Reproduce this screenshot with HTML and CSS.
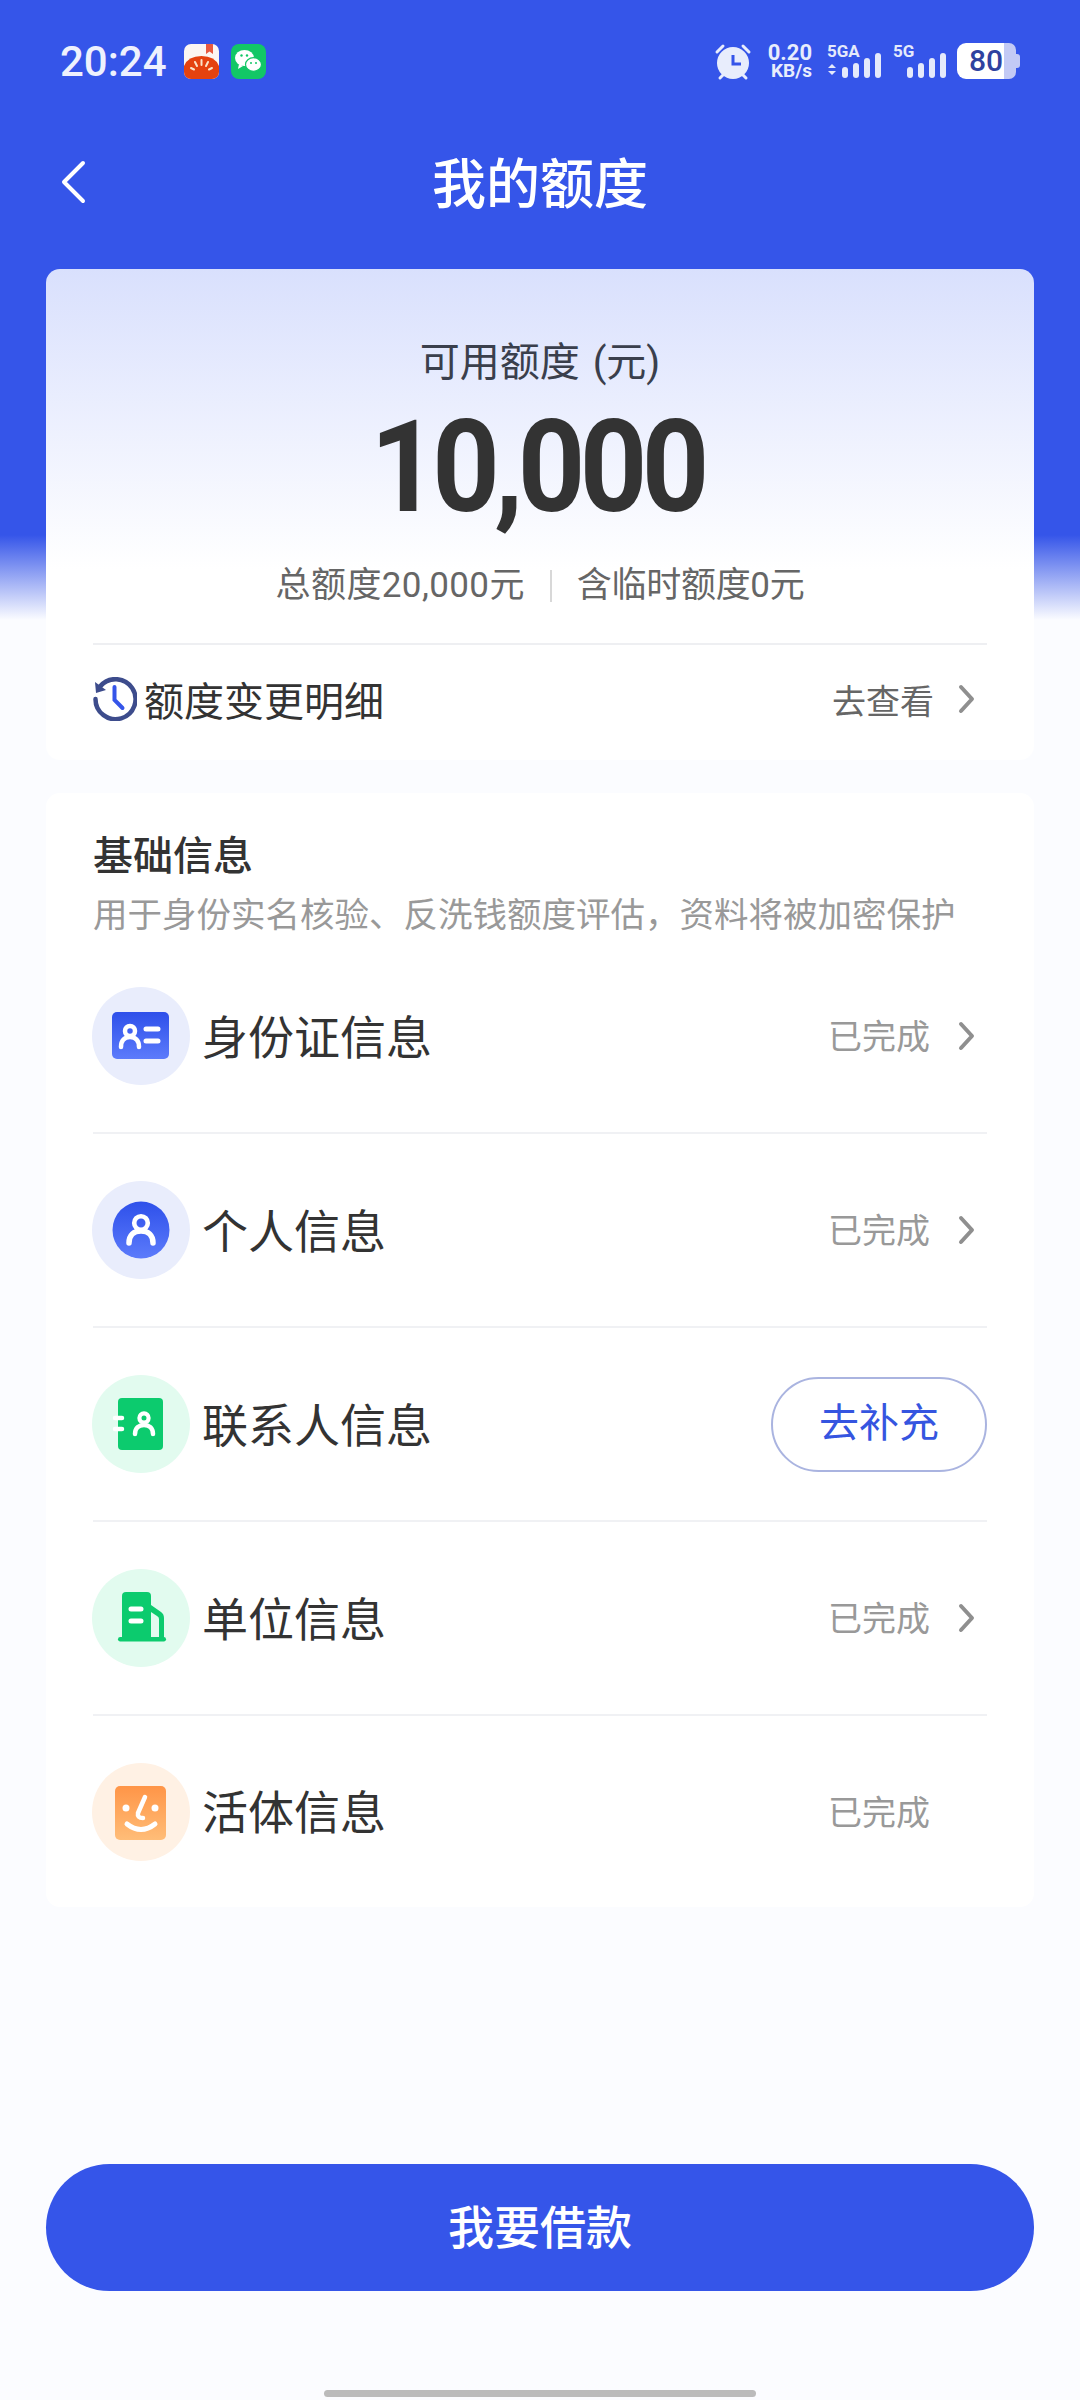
FILE: index.html
```html
<!DOCTYPE html>
<html lang="zh-CN">
<head>
  <meta charset="UTF-8">
  <meta name="viewport" content="width=device-width, initial-scale=1.0">
  <title>我的额度</title>
  <link rel="stylesheet" href="styles.css">
</head>
<body>

<div class="page">
  <!-- 状态栏 -->
  <div class="status-bar">
    <div class="status-left">
      <span class="time">20:24</span>
      <svg class="app-icon" viewBox="0 0 35 35">
        <defs><clipPath id="tomatoClip"><rect width="35" height="35" rx="7"/></clipPath></defs>
        <g clip-path="url(#tomatoClip)">
          <rect width="35" height="35" fill="#fbf6f2"/>
          <path d="M22 0h7v10l-3.500-2.500L22 10z" fill="#e8593f"/>
          <path d="M0 22Q4 12 17.500 12T35 22V35H0z" fill="#e5420f"/>
          <path d="M17.500 16v5M11 18l2 4M24 18l-2 4M7 24l3 1.500M28 24l-3 1.500" stroke="#fbe3c8" stroke-width="2" stroke-linecap="round"/>
        </g>
      </svg>
      <svg class="app-icon" viewBox="0 0 35 35">
        <rect width="35" height="35" rx="8" fill="#12c766"/>
        <ellipse cx="13.500" cy="14" rx="9.500" ry="8" fill="#fff"/>
        <path d="M8 20l-1 5 5-3z" fill="#fff"/>
        <ellipse cx="22.500" cy="20.500" rx="8" ry="6.800" fill="#fff" stroke="#12c766" stroke-width="1.200"/>
        <circle cx="10.500" cy="11.500" r="1.200" fill="#12c766"/>
        <circle cx="16" cy="11.500" r="1.200" fill="#12c766"/>
        <circle cx="20" cy="19" r="1" fill="#12c766"/>
        <circle cx="25" cy="19" r="1" fill="#12c766"/>
      </svg>
    </div>
    <div class="status-right">
      <svg class="alarm" viewBox="0 0 38 38">
        <circle cx="19" cy="20" r="16" fill="#e8edfc"/>
        <path d="M3 9l6-6M35 9l-6-6M6 35l3-3M32 35l-3-3" stroke="#e8edfc" stroke-width="3" stroke-linecap="round"/>
        <path d="M19 12v9h8" fill="none" stroke="#3555e9" stroke-width="3"/>
      </svg>
      <div class="speed">
        <div class="speed-num">0.20</div>
        <div class="speed-unit">KB/s</div>
      </div>
      <div class="signal signal-a">
        <span class="signal-label">5GA</span>
        <svg class="signal-bars" viewBox="0 0 55 36">
          <path d="M1 25l4-4 4 4zM1 28l4 4 4-4z" fill="#e5eafb"/>
          <rect x="15" y="24" width="6" height="11" rx="3" fill="#e5eafb"/>
          <rect x="26" y="20" width="6" height="15" rx="3" fill="#e5eafb"/>
          <rect x="37" y="15" width="6" height="20" rx="3" fill="#e5eafb"/>
          <rect x="48" y="10" width="6" height="25" rx="3" fill="#e5eafb"/>
        </svg>
      </div>
      <div class="signal signal-b">
        <span class="signal-label">5G</span>
        <svg class="signal-bars" viewBox="0 0 54 36">
          <rect x="14" y="24" width="6" height="11" rx="3" fill="#e5eafb"/>
          <rect x="25" y="20" width="6" height="15" rx="3" fill="#e5eafb"/>
          <rect x="36" y="15" width="6" height="20" rx="3" fill="#e5eafb"/>
          <rect x="47" y="10" width="6" height="25" rx="3" fill="#e5eafb"/>
        </svg>
      </div>
      <div class="battery">
        <span class="battery-level">80</span>
        <span class="battery-rest"></span>
        <span class="battery-nub"></span>
      </div>
    </div>
  </div>

  <!-- 标题 -->
  <div class="nav-bar">
    <svg class="nav-back" viewBox="0 0 26 44">
      <path d="M23 3L4 22l19 19" fill="none" stroke="#fff" stroke-width="4" stroke-linecap="round" stroke-linejoin="round"/>
    </svg>
    <h1>我的额度</h1>
  </div>

  <!-- 额度卡片 -->
  <div class="card quota-card">
    <div class="quota-label">可用额度 (元)</div>
    <div class="quota-amount">10,000</div>
    <div class="quota-meta">
      <span class="meta-total">总额度20,000元</span>
      <i class="meta-line"></i>
      <span class="meta-temp">含临时额度0元</span>
    </div>
    <div class="detail-row">
      <svg class="history-icon" viewBox="0 0 44 44">
        <path d="M7 9.500A20 20 0 1 1 2.500 22" fill="none" stroke="#3d4c8c" stroke-width="4.500" stroke-linecap="round"/>
        <path d="M2 5l1 11 10-3z" fill="#3d4c8c"/>
        <path d="M21.500 10v13l8 8" fill="none" stroke="#3555e9" stroke-width="4" stroke-linecap="round"/>
      </svg>
      <span class="detail-title">额度变更明细</span>
      <span class="detail-link">去查看</span>
      <svg class="chevron" viewBox="0 0 17 30"><path d="M3 3l11 12L3 27" fill="none" stroke="#8f8f8f" stroke-width="4" stroke-linecap="round" stroke-linejoin="round"/></svg>
    </div>
  </div>

  <!-- 基础信息 -->
  <div class="card info-card">
    <div class="info-title">基础信息</div>
    <div class="info-desc">用于身份实名核验、反洗钱额度评估，资料将被加密保护</div>

    <div class="info-list">
      <div class="info-row">
        <svg class="row-icon" viewBox="0 0 98 98">
          <defs>
            <linearGradient id="blueFill" x1="0" y1="0" x2="0" y2="1">
              <stop offset="0" stop-color="#2e50ea"/>
              <stop offset="1" stop-color="#5c7bfb"/>
            </linearGradient>
          </defs>
          <circle cx="49" cy="49" r="49" fill="#e9edfc"/>
          <rect x="20" y="25" width="57" height="47" rx="5" fill="url(#blueFill)"/>
          <circle cx="38" cy="44" r="5" fill="none" stroke="#fff" stroke-width="4.500"/>
          <path d="M29 60c0-7 4-10 9-10s9 3 9 10" fill="none" stroke="#fff" stroke-width="4.500" stroke-linecap="round"/>
          <path d="M54 42h12M54 54h12" stroke="#fff" stroke-width="5" stroke-linecap="round"/>
        </svg>
        <span class="row-name">身份证信息</span>
        <span class="row-state">已完成</span>
        <svg class="chevron" viewBox="0 0 17 30"><path d="M3 3l11 12L3 27" fill="none" stroke="#8f8f8f" stroke-width="4" stroke-linecap="round" stroke-linejoin="round"/></svg>
      </div>

      <div class="info-row">
        <svg class="row-icon" viewBox="0 0 98 98">
          <circle cx="49" cy="49" r="49" fill="#e9edfc"/>
          <circle cx="49" cy="49" r="28.500" fill="url(#blueFill)"/>
          <circle cx="49" cy="42" r="6.800" fill="none" stroke="#fff" stroke-width="4.600"/>
          <path d="M37 62c0-8 5-12 12-12s12 4 12 12" fill="none" stroke="#fff" stroke-width="5.500" stroke-linecap="round"/>
        </svg>
        <span class="row-name">个人信息</span>
        <span class="row-state">已完成</span>
        <svg class="chevron" viewBox="0 0 17 30"><path d="M3 3l11 12L3 27" fill="none" stroke="#8f8f8f" stroke-width="4" stroke-linecap="round" stroke-linejoin="round"/></svg>
      </div>

      <div class="info-row">
        <svg class="row-icon" viewBox="0 0 98 98">
          <circle cx="49" cy="49" r="49" fill="#e2fbef"/>
          <rect x="26" y="23" width="45" height="52" rx="4" fill="#0ccb6e"/>
          <path d="M23 43h7M23 54h7" stroke="#fff" stroke-width="4.500" stroke-linecap="round"/>
          <circle cx="52" cy="43" r="4.600" fill="none" stroke="#fff" stroke-width="4.200"/>
          <path d="M43 59c0-6 4-9 9-9s9 3 9 9" fill="none" stroke="#fff" stroke-width="4.500" stroke-linecap="round"/>
        </svg>
        <span class="row-name">联系人信息</span>
        <span class="row-btn">去补充</span>
      </div>

      <div class="info-row">
        <svg class="row-icon" viewBox="0 0 98 98">
          <circle cx="49" cy="49" r="49" fill="#e2fbef"/>
          <path d="M30 69V27a4 4 0 0 1 4-4h21a4 4 0 0 1 4 4v42z" fill="#0ccb6e"/>
          <path d="M59 36l10 7q3 2 3 6v20h-5V50q0-2-2-3l-6-4z" fill="#0ccb6e"/>
          <rect x="26" y="68" width="48" height="4.500" rx="2.200" fill="#0ccb6e"/>
          <path d="M39 40h10M39 52h10" stroke="#fff" stroke-width="5" stroke-linecap="round"/>
        </svg>
        <span class="row-name">单位信息</span>
        <span class="row-state">已完成</span>
        <svg class="chevron" viewBox="0 0 17 30"><path d="M3 3l11 12L3 27" fill="none" stroke="#8f8f8f" stroke-width="4" stroke-linecap="round" stroke-linejoin="round"/></svg>
      </div>

      <div class="info-row">
        <svg class="row-icon" viewBox="0 0 98 98">
          <defs>
            <linearGradient id="orangeFill" x1="0" y1="0" x2="0" y2="1">
              <stop offset="0" stop-color="#ff9547"/>
              <stop offset="1" stop-color="#ffbd78"/>
            </linearGradient>
          </defs>
          <circle cx="49" cy="49" r="49" fill="#fff1e4"/>
          <rect x="23" y="23" width="51" height="54" rx="5" fill="url(#orangeFill)"/>
          <circle cx="34" cy="45" r="3.500" fill="#fff"/>
          <circle cx="63" cy="45" r="3.500" fill="#fff"/>
          <path d="M53 34l-7 16q-1 5 5 5" fill="none" stroke="#fff" stroke-width="4.500" stroke-linecap="round" stroke-linejoin="round"/>
          <path d="M35 61q14 11 28 0" fill="none" stroke="#fff" stroke-width="5" stroke-linecap="round"/>
        </svg>
        <span class="row-name">活体信息</span>
        <span class="row-state">已完成</span>
        <span class="chevron"></span>
      </div>
    </div>
  </div>

  <button class="loan-btn">我要借款</button>
  <div class="home-bar"></div>
</div>

</body>
</html>
```

FILE: styles.css
```css
* {
  margin: 0;
  padding: 0;
  box-sizing: border-box;
}

body {
  font-family: Roboto, 'Noto Sans CJK SC', sans-serif;
  background: #fbfcff;
  color: #333;
}

.page {
  width: 1080px;
  height: 2400px;
  display: flex;
  flex-direction: column;
  background: linear-gradient(to bottom, #3555e9 535px, #fbfcff 620px);
}

/* status bar */
.status-bar {
  height: 132px;
  padding: 43px 60px 0;
  display: flex;
  justify-content: space-between;
  align-items: flex-start;
}

.status-left {
  display: flex;
  align-items: center;
  height: 36px;
}

.time {
  font-size: 42px;
  font-weight: 500;
  color: #eef1fd;
  width: 124px;
}

.app-icon {
  width: 35px;
  height: 35px;
  margin-right: 12px;
}

.status-right {
  display: flex;
  align-items: flex-start;
}

.alarm {
  width: 38px;
  height: 38px;
  margin-right: 14px;
}

.speed {
  width: 46px;
  margin-right: 15px;
  text-align: right;
  color: #e8edfc;
  font-weight: 700;
}

.speed-num {
  font-size: 22px;
  line-height: 19px;
}

.speed-unit {
  font-size: 19px;
  line-height: 18px;
}

.signal {
  display: grid;
  height: 36px;
}

.signal > * {
  grid-area: 1 / 1;
}

.signal-a {
  width: 55px;
  margin-right: 11px;
}

.signal-b {
  width: 54px;
  margin-right: 10px;
}

.signal-label {
  font-size: 17px;
  font-weight: 700;
  line-height: 16px;
  color: #e5eafb;
}

.signal-bars {
  width: 100%;
  height: 36px;
}

.battery {
  display: flex;
  align-items: center;
  height: 36px;
}

.battery-level {
  width: 47px;
  height: 36px;
  padding-left: 12px;
  background: #fff;
  border-radius: 9px 0 0 9px;
  color: #2f429f;
  font-size: 30px;
  font-weight: 500;
  line-height: 36px;
  white-space: nowrap;
}

.battery-rest {
  width: 12px;
  height: 36px;
  background: #c3caf5;
  border-radius: 0 7px 7px 0;
}

.battery-nub {
  width: 4px;
  height: 14px;
  background: #c3caf5;
  border-radius: 0 3px 3px 0;
}

/* title */
.nav-bar {
  position: relative;
  height: 100px;
  padding-bottom: 3px;
  display: flex;
  align-items: center;
  justify-content: center;
}

.nav-bar h1 {
  font-size: 54px;
  font-weight: 500;
  color: #fff;
}

.nav-back {
  position: absolute;
  left: 60px;
  top: 28px;
  width: 26px;
  height: 44px;
}

/* cards */
.card {
  margin: 0 46px;
  border-radius: 14px;
  background: #fff;
}

.quota-card {
  margin-top: 37px;
  height: 491px;
  padding: 71px 47px 0;
  text-align: center;
  background: linear-gradient(to bottom, #d9e0fd 0, #fff 300px);
}

.quota-label {
  font-size: 40px;
  line-height: 46px;
  word-spacing: 3px;
  color: #3a3f4c;
}

.quota-amount {
  margin-top: 16px;
  font-size: 128px;
  font-weight: 700;
  line-height: 130px;
  letter-spacing: -6px;
  color: #333;
  transform: translateX(-3px) scaleX(0.92);
}

.quota-meta {
  margin-top: 34px;
  display: flex;
  justify-content: center;
  align-items: center;
  font-size: 35px;
  line-height: 40px;
  color: #666;
}

.meta-total {
  letter-spacing: 0.4px;
}

.meta-temp {
  letter-spacing: -0.3px;
}

.meta-line {
  width: 2px;
  height: 32px;
  margin: 0 25px;
  background: #d8d8d8;
}

.detail-row {
  margin-top: 37px;
  height: 110px;
  padding-right: 12px;
  border-top: 2px solid #eeeff2;
  display: flex;
  align-items: center;
}

.history-icon {
  width: 44px;
  height: 44px;
  margin-right: 7px;
}

.detail-title {
  flex: 1;
  font-size: 40px;
  color: #333;
  text-align: left;
}

.detail-link {
  font-size: 34px;
  color: #666;
  margin-right: 24px;
}

.chevron {
  display: block;
  width: 17px;
  height: 30px;
}

.info-card {
  margin-top: 33px;
  padding: 41px 47px 0;
}

.info-title {
  font-size: 40px;
  font-weight: 500;
  line-height: 46px;
  color: #333;
}

.info-desc {
  margin-top: 15px;
  font-size: 34.500px;
  line-height: 40px;
  color: #999;
  white-space: nowrap;
}

.info-list {
  margin-top: 5px;
}

.info-row {
  height: 194px;
  border-bottom: 2px solid #f0f1f4;
  display: flex;
  align-items: center;
}

.info-row:last-child {
  height: 191px;
  border-bottom: none;
}

.row-icon {
  width: 98px;
  height: 98px;
  margin-left: -1px;
  margin-right: 12px;
}

.row-name {
  flex: 1;
  padding-bottom: 5px;
  font-size: 46px;
  color: #333;
}

.row-state {
  padding-bottom: 3px;
  font-size: 34px;
  color: #999;
  margin-right: 28px;
}

.info-row .chevron {
  margin-right: 12px;
}

.row-btn {
  width: 216px;
  height: 95px;
  border: 2px solid #aab4e0;
  border-radius: 48px;
  font-size: 40px;
  line-height: 89px;
  text-align: center;
  color: #3555e0;
}

/* bottom */
.loan-btn {
  margin: auto 46px 99px;
  height: 127px;
  padding-bottom: 7px;
  background: #3555e9;
  color: #fff;
  border: none;
  border-radius: 64px;
  font-family: inherit;
  font-size: 46px;
  font-weight: 500;
}

.home-bar {
  width: 432px;
  height: 7px;
  margin: 0 auto 3px;
  border-radius: 4px;
  background: #bbb;
}
```
